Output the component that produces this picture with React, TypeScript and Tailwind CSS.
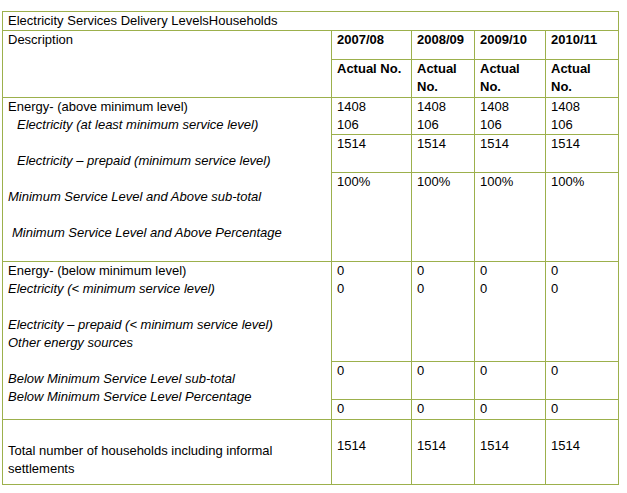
import React from "react";

const YEARS = ["2007/08", "2008/09", "2009/10", "2010/11"];

const cell = "border border-[#9cb04c] align-top px-[5px] pt-0 leading-[18px]";

function Lines({ items }: { items: React.ReactNode[] }) {
  return (
    <>
      {items.map((t, i) => (
        <div key={i} className="h-[18px] whitespace-nowrap">
          {t}
        </div>
      ))}
    </>
  );
}

export default function App() {
  return (
    <div className="bg-white w-[627px] h-[493px] pt-[11px] pl-[2px] text-[13px] text-black font-['Liberation_Sans',Arial,sans-serif]">
      <table className="table-fixed border-collapse w-[616px]">
        <colgroup>
          <col className="w-[329px]" />
          <col className="w-[80px]" />
          <col className="w-[63px]" />
          <col className="w-[71px]" />
          <col className="w-[73px]" />
        </colgroup>
        <tbody>
          <tr className="h-[19px]">
            <td colSpan={5} className={cell}>
              Electricity Services Delivery LevelsHouseholds
            </td>
          </tr>
          <tr className="h-[29px]">
            <td rowSpan={2} className={cell}>
              Description
            </td>
            {YEARS.map((y) => (
              <td key={y} className={`${cell} font-bold`}>
                {y}
              </td>
            ))}
          </tr>
          <tr className="h-[38px]">
            <td className={`${cell} font-bold`}>Actual No.</td>
            <td className={`${cell} font-bold`}>
              Actual
              <br />
              No.
            </td>
            <td className={`${cell} font-bold`}>
              Actual
              <br />
              No.
            </td>
            <td className={`${cell} font-bold`}>
              Actual
              <br />
              No.
            </td>
          </tr>

          <tr className="h-[36px]">
            <td rowSpan={3} className={cell}>
              <Lines
                items={[
                  "Energy- (above minimum level)",
                  <i className="pl-[9px]">Electricity (at least minimum service level)</i>,
                  "",
                  <i className="pl-[9px]">Electricity – prepaid (minimum service level)</i>,
                  "",
                  <i>Minimum Service Level and Above sub-total</i>,
                  "",
                  <i className="pl-[4px]">Minimum Service Level and Above Percentage</i>,
                ]}
              />
            </td>
            {YEARS.map((y) => (
              <td key={y} className={cell}>
                <Lines items={["1408", "106"]} />
              </td>
            ))}
          </tr>
          <tr className="h-[38px]">
            {YEARS.map((y) => (
              <td key={y} className={cell}>
                1514
              </td>
            ))}
          </tr>
          <tr className="h-[89px]">
            {YEARS.map((y) => (
              <td key={y} className={cell}>
                100%
              </td>
            ))}
          </tr>

          <tr className="h-[100px]">
            <td rowSpan={3} className={cell}>
              <Lines
                items={[
                  "Energy- (below minimum level)",
                  <i>Electricity (&lt; minimum service level)</i>,
                  "",
                  <i>Electricity – prepaid (&lt; minimum service level)</i>,
                  <i>Other energy sources</i>,
                  "",
                  <i>Below Minimum Service Level sub-total</i>,
                  <i>Below Minimum Service Level Percentage</i>,
                ]}
              />
            </td>
            {YEARS.map((y) => (
              <td key={y} className={cell}>
                <Lines items={["0", "0"]} />
              </td>
            ))}
          </tr>
          <tr className="h-[38px]">
            {YEARS.map((y) => (
              <td key={y} className={cell}>
                0
              </td>
            ))}
          </tr>
          <tr className="h-[20px]">
            {YEARS.map((y) => (
              <td key={y} className={cell}>
                0
              </td>
            ))}
          </tr>

          <tr className="h-[65px]">
            <td className={`${cell} pt-[22px]`}>
              <Lines items={["Total number of households including informal", "settlements"]} />
            </td>
            {YEARS.map((y) => (
              <td key={y} className={`${cell} pt-[17px]`}>
                1514
              </td>
            ))}
          </tr>
        </tbody>
      </table>
    </div>
  );
}
